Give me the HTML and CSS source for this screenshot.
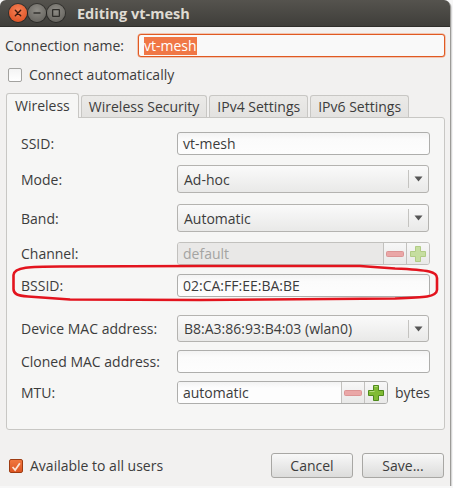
FILE: index.html
```html
<!DOCTYPE html>
<html>
<head>
<meta charset="utf-8">
<title>Editing vt-mesh</title>
<link rel="stylesheet" href="styles.css">
</head>
<body>
<div class="window">
  <div class="titlebar">
    <div class="wbtns">
      <span class="wbtn close"><svg width="18" height="18" viewBox="0 0 18 18"><path d="M6.3 6.3 L11.7 11.7 M11.7 6.3 L6.3 11.7" stroke="#3a1a10" stroke-width="1.4" stroke-linecap="round"/></svg></span>
      <span class="wbtn"><svg width="18" height="18" viewBox="0 0 18 18"><path d="M5.5 9 H12.5" stroke="#2e2d2a" stroke-width="1.4"/></svg></span>
      <span class="wbtn"><svg width="18" height="18" viewBox="0 0 18 18"><rect x="5.6" y="5.6" width="6.8" height="6.8" fill="none" stroke="#2e2d2a" stroke-width="1.3" rx="0.5"/></svg></span>
    </div>
    <div class="title">Editing vt-mesh</div>
  </div>

  <div class="content">
    <div class="name-row">
      <span class="label">Connection name:</span>
      <div class="entry focused"><span class="sel">vt-mesh</span></div>
    </div>

    <div class="check-row top">
      <span class="check"></span>
      <span class="label">Connect automatically</span>
    </div>

    <div class="tabs">
      <span class="tab active">Wireless</span>
      <span class="tab">Wireless Security</span>
      <span class="tab">IPv4 Settings</span>
      <span class="tab">IPv6 Settings</span>
    </div>

    <div class="panel">
      <div class="row r-ssid">
        <span class="label">SSID:</span>
        <div class="entry">vt-mesh</div>
      </div>
      <div class="row combo-row r-mode">
        <span class="label">Mode:</span>
        <div class="combo"><span class="combo-text">Ad-hoc</span><span class="combo-arrow"><svg width="9" height="6" viewBox="0 0 9 6"><path d="M0.5 0.5 H8.5 L4.5 5.5 Z" fill="#555"/></svg></span></div>
      </div>
      <div class="row combo-row r-band">
        <span class="label">Band:</span>
        <div class="combo"><span class="combo-text">Automatic</span><span class="combo-arrow"><svg width="9" height="6" viewBox="0 0 9 6"><path d="M0.5 0.5 H8.5 L4.5 5.5 Z" fill="#555"/></svg></span></div>
      </div>
      <div class="row r-channel">
        <span class="label">Channel:</span>
        <div class="spin disabled">
          <div class="spin-text">default</div>
          <span class="spin-btn"><svg width="18" height="8" viewBox="0 0 18 8"><rect x="0.5" y="1.5" width="17" height="5" rx="1" fill="#eaa7a7" stroke="#dc9494"/></svg></span>
          <span class="spin-btn"><svg width="18" height="18" viewBox="0 0 18 18"><path d="M6.5 1.5 H11.5 V6.5 H16.5 V11.5 H11.5 V16.5 H6.5 V11.5 H1.5 V6.5 H6.5 Z" fill="#c6dea0" stroke="#b1cc85"/></svg></span>
        </div>
      </div>
      <div class="row r-bssid">
        <span class="label">BSSID:</span>
        <div class="entry">02:CA:FF:EE:BA:BE</div>
      </div>
      <div class="row combo-row r-device">
        <span class="label">Device MAC address:</span>
        <div class="combo"><span class="combo-text">B8:A3:86:93:B4:03 (wlan0)</span><span class="combo-arrow"><svg width="9" height="6" viewBox="0 0 9 6"><path d="M0.5 0.5 H8.5 L4.5 5.5 Z" fill="#555"/></svg></span></div>
      </div>
      <div class="row r-cloned">
        <span class="label">Cloned MAC address:</span>
        <div class="entry"></div>
      </div>
      <div class="row r-mtu">
        <span class="label">MTU:</span>
        <div class="mtu-wrap">
          <div class="spin">
            <div class="spin-text">automatic</div>
            <span class="spin-btn"><svg width="18" height="8" viewBox="0 0 18 8"><rect x="0.5" y="1.5" width="17" height="5" rx="1" fill="#eaa7a7" stroke="#dc9494"/></svg></span>
            <span class="spin-btn"><svg width="18" height="18" viewBox="0 0 18 18"><path d="M6.5 1.5 H11.5 V6.5 H16.5 V11.5 H11.5 V16.5 H6.5 V11.5 H1.5 V6.5 H6.5 Z" fill="#80bb35" stroke="#4f8a1c"/><path d="M7.5 2.5 H10.5 M2.5 7.5 H7.5" stroke="#b7dc80" stroke-width="1"/></svg></span>
          </div>
          <span class="label">bytes</span>
        </div>
      </div>
    </div>

    <div class="footer">
      <div class="check-row">
        <span class="check checked"><svg width="14" height="14" viewBox="0 0 14 14"><path d="M3 7 L6 10.5 L11.5 2.5" fill="none" stroke="#fbe3d5" stroke-width="2"/></svg></span>
        <span class="label">Available to all users</span>
      </div>
      <div class="buttons">
        <span class="button">Cancel</span>
        <span class="button">Save...</span>
      </div>
    </div>
  </div>

  <svg class="mark" width="453" height="488" viewBox="0 0 453 488">
    <path d="M60 266.5 C30 266.5 14 267 13.5 275 L13.5 289 C13.5 294 17 295.5 28 296.5 L70 299.5 L200 300 L395 298.5 C425 297.5 436.5 297 437 290 L437 278 C437 272 430 270 395 268.5 L360 266 L200 266 Z" fill="none" stroke="#e3141e" stroke-width="2.6" stroke-linejoin="round"/>
  </svg>
</div>
</body>
</html>
```

FILE: styles.css
```css
* { box-sizing: border-box; }
html, body {
  margin: 0;
  padding: 0;
  background: #f7f7f7;
}
body {
  font-family: "Open Sans", "Noto Sans", "DejaVu Sans", sans-serif;
  font-size: 14px;
  color: #3c3c3c;
}
.window {
  position: relative;
  width: 450px;
  height: 486px;
  background: #f2f1f0;
  border-radius: 6px 6px 0 0;
  box-shadow: 1px 1px 0 #9c9b98, 2px 2px 1px rgba(0,0,0,0.15);
}
.titlebar {
  height: 27px;
  display: flex;
  align-items: center;
  background: linear-gradient(#55534e, #3f3e3a);
  border-radius: 6px 6px 0 0;
  border-bottom: 1px solid #2f2e2b;
}
.wbtns {
  display: flex;
  gap: 1px;
  margin-left: 9px;
}
.wbtn {
  width: 18px;
  height: 18px;
  border-radius: 50%;
  background: radial-gradient(circle at 50% 35%, #8e8c86, #5d5b56);
  box-shadow: 0 0 0 1px rgba(0,0,0,0.35);
  display: flex;
}
.wbtn.close {
  background: radial-gradient(circle at 50% 35%, #f58257, #d9481a);
}
.title {
  margin-left: 12px;
  font-weight: bold;
  color: #dfdbd2;
  font-size: 14.5px;
}
.content {
  padding: 7px 5px 0 5px;
}
.name-row {
  display: flex;
  align-items: center;
  justify-content: space-between;
}
.entry {
  width: 253px;
  height: 23px;
  border: 1px solid #aeaeac;
  border-radius: 3px;
  background: linear-gradient(#f3f3f3, #fbfbfb 30%, #fdfdfd);
  padding-left: 5px;
  display: flex;
  align-items: center;
  line-height: 1;
}
.name-row .entry {
  width: 307px;
  border-color: #e05a22;
  box-shadow: 0 0 0 0.5px #f29a75;
  background: #f9f9f9;
}
.sel {
  background: #f07746;
  color: #fff;
  padding: 2px 0;
}
.check-row {
  display: flex;
  align-items: center;
  gap: 7px;
}
.check-row.top {
  margin: 8px 0 0 3px;
}
.check {
  width: 14px;
  height: 14px;
  border: 1px solid #a3a29f;
  border-radius: 2px;
  background: linear-gradient(#f4f4f4, #ffffff);
  display: flex;
}
.check.checked {
  border-color: #9e3c12;
  background: linear-gradient(#f0773f, #dd5522);
}
.tabs {
  display: flex;
  gap: 2px;
  margin: 9px 0 0 1px;
  align-items: flex-end;
  height: 24px;
}
.tab {
  height: 22px;
  padding: 0 7px;
  border: 1px solid #c8c7c4;
  border-bottom: none;
  border-radius: 3px 3px 0 0;
  background: linear-gradient(#ebeae8, #e3e2e0);
  display: flex;
  align-items: center;
  position: relative;
}
.tab.active {
  height: 25px;
  padding: 0 8px 1px 8px;
  background: #f6f6f5;
  margin-bottom: -1px;
  z-index: 1;
}
.panel {
  margin-left: 1px;
  width: 439px;
  border: 1px solid #c8c7c4;
  border-radius: 0 3px 3px 3px;
  background: #f6f6f5;
  padding: 14px 14px 25px 14px;
  display: flex;
  flex-direction: column;
}
.row {
  display: flex;
  align-items: center;
  justify-content: space-between;
  height: 23px;
}
.combo-row { height: 28px; }
.r-mode { margin-top: 10px; }
.r-band { margin-top: 11px; }
.r-channel { margin-top: 10px; }
.r-bssid { margin-top: 9px; }
.r-device { margin-top: 18px; height: 27px; }
.r-cloned { margin-top: 8px; }
.r-mtu { margin-top: 8px; }
.combo {
  width: 252px;
  height: 100%;
  border: 1px solid #b4b3b0;
  border-radius: 3px;
  background: linear-gradient(#fafafa, #e9e9e8);
  display: flex;
  align-items: center;
  margin-right: 1px;
}
.combo-text {
  flex: 1;
  padding-left: 6px;
}
.combo-arrow {
  width: 20px;
  height: 18px;
  border-left: 1px solid #c4c3c0;
  display: flex;
  align-items: center;
  justify-content: center;
}
.spin {
  width: 253px;
  height: 23px;
  border: 1px solid #aeaeac;
  border-radius: 3px;
  display: flex;
  overflow: hidden;
}
.spin-text {
  flex: 1;
  padding-left: 5px;
  display: flex;
  align-items: center;
  background: linear-gradient(#f3f3f3, #fdfdfd 30%);
}
.spin.disabled {
  border-color: #c2c1be;
}
.spin.disabled .spin-text {
  background: #e9e8e7;
  color: #a4a4a2;
}
.spin-btn {
  width: 23px;
  border-left: 1px solid #c2c1be;
  background: linear-gradient(#f7f7f7, #e9e9e8);
  display: flex;
  align-items: center;
  justify-content: center;
}
.mtu-wrap {
  width: 253px;
  display: flex;
  align-items: center;
  justify-content: space-between;
}
.mtu-wrap .spin {
  width: 211px;
}
.footer {
  display: flex;
  align-items: center;
  justify-content: space-between;
  margin-top: 23px;
  padding-left: 4px;
}
.buttons {
  display: flex;
  gap: 9px;
  margin-right: 1px;
}
.button {
  width: 82px;
  height: 25px;
  border: 1px solid #a8a7a4;
  border-radius: 3px;
  background: linear-gradient(#f8f8f8, #dcdcdb);
  display: flex;
  align-items: center;
  justify-content: center;
}
.mark {
  position: absolute;
  left: 0;
  top: 0;
  pointer-events: none;
}
```
